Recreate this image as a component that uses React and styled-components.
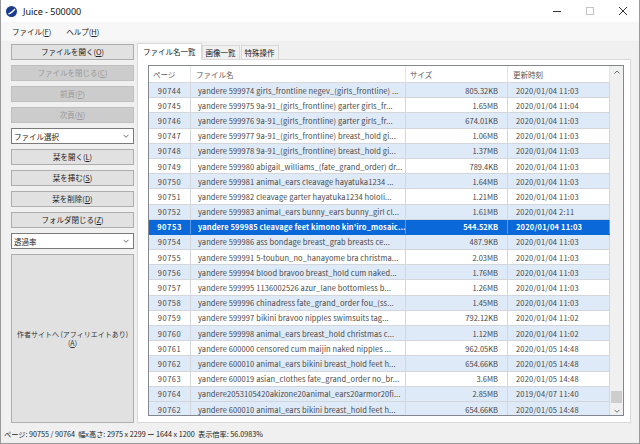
import React from 'react';
import styled, { createGlobalStyle } from 'styled-components';

const Global = createGlobalStyle`
  html, body { margin: 0; padding: 0; background: #f0f0f0; }
  * { box-sizing: border-box; }
`;

const UI = `"Noto Sans CJK JP", "Noto Sans", sans-serif`;

const Window = styled.div`
  width: 640px;
  height: 444px;
  display: flex;
  flex-direction: column;
  background: #f0f0f0;
  border: 1px solid #9a9a9a;
  border-top: none;
  font-family: ${UI};
  font-size: 7.5px;
  color: #000;
  overflow: hidden;
`;

const TitleBar = styled.div`
  height: 22px;
  flex: none;
  background: #fff;
  display: flex;
  align-items: center;
  padding-left: 5px;
`;

const Title = styled.div`
  font-family: "Noto Sans", ${UI};
  font-size: 9px;
  margin-left: 6px;
  flex: 1;
  color: #111;
`;

const WinControls = styled.div`
  display: flex;
  align-items: center;
  height: 100%;
`;

const WinBtn = styled.div`
  width: 33px;
  height: 22px;
  display: flex;
  align-items: center;
  justify-content: center;
`;

const MenuBar = styled.div`
  height: 19px;
  flex: none;
  background: #f7f7f7;
  display: flex;
  align-items: center;
  padding-left: 7px;
`;

const MenuItem = styled.div`
  padding: 0 4px;
  margin-right: 7px;
  font-size: 7.5px;
  color: #222;
`;

const Main = styled.div`
  flex: 1;
  display: flex;
  min-height: 0;
`;

const Sidebar = styled.div`
  width: 133px;
  flex: none;
  display: flex;
  flex-direction: column;
  gap: 5px;
  padding: 3px 0 1px 10px;
`;

const Btn = styled.button`
  height: 16px;
  width: 100%;
  flex: none;
  padding: 0;
  margin: 0;
  border: 1px solid ${p => (p.disabled ? '#bfbfbf' : '#adadad')};
  background: ${p => (p.disabled ? '#cccccc' : '#e1e1e1')};
  color: ${p => (p.disabled ? '#9a9a9a' : '#222')};
  font-family: ${UI};
  font-size: 7.5px;
  line-height: 14px;
  display: flex;
  align-items: center;
  justify-content: center;
  white-space: nowrap;
`;

const BigBtn = styled(Btn)`
  flex: 1;
  height: auto;
  flex-direction: column;
  line-height: 8.5px;
  font-size: 7px;
  color: #333;
`;

const Combo = styled.div`
  height: 16px;
  flex: none;
  border: 1px solid #7a7a7a;
  background: #fff;
  display: flex;
  align-items: center;
  padding: 0 4px 0 2px;
  font-size: 7.5px;
  color: #222;
`;

const ComboText = styled.span`
  flex: 1;
`;

const TabArea = styled.div`
  flex: 1;
  display: flex;
  flex-direction: column;
  padding: 1px 8px 1px 3px;
  min-width: 0;
`;

const TabStrip = styled.div`
  height: 17px;
  flex: none;
  display: flex;
  align-items: flex-end;
  position: relative;
  z-index: 1;
`;

const Tab = styled.div`
  height: ${p => (p.active ? '17px' : '14px')};
  padding: 0 ${p => (p.active ? '5px' : '3px')};
  margin-right: ${p => (p.active ? '0' : '1px')};
  background: ${p => (p.active ? '#fff' : '#f0f0f0')};
  border: 1px solid #d9d9d9;
  border-bottom: ${p => (p.active ? '1px solid #fff' : 'none')};
  display: flex;
  align-items: center;
  font-size: 7.5px;
  color: #222;
  margin-bottom: ${p => (p.active ? '-1px' : '0')};
`;

const TabPanel = styled.div`
  flex: 1;
  background: #fff;
  border: 1px solid #d9d9d9;
  padding: 5px 6px 6px 10px;
  display: flex;
  min-height: 0;
`;

const ListView = styled.div`
  flex: 1;
  border: 1px solid #828790;
  display: flex;
  min-height: 0;
  background: #fff;
`;

const ListBody = styled.div`
  flex: 1;
  display: flex;
  flex-direction: column;
  overflow: hidden;
  min-width: 0;
`;

const COLS = '42px 215px 102px 1fr';

const HeaderRow = styled.div`
  height: 17px;
  flex: none;
  display: grid;
  grid-template-columns: ${COLS};
  border-bottom: 1px solid #d8d8d8;
`;

const HeadCell = styled.div`
  display: flex;
  align-items: center;
  padding-left: ${p => p.pad || 4}px;
  color: #5a5a5a;
  border-right: 1px solid #e5e5e5;
  font-size: 7.5px;
`;

const Row = styled.div`
  height: 15.2px;
  flex: none;
  display: grid;
  grid-template-columns: ${COLS};
  background: ${p => (p.selected ? '#0b68d8' : p.alt ? '#dfeaf8' : '#fff')};
  color: ${p => (p.selected ? '#fff' : '#484848')};
  font-weight: ${p => (p.selected ? 700 : 400)};
  border-bottom: 1px solid ${p => (p.selected ? '#0b68d8' : '#d3d7dc')};
`;

const Cell = styled.div`
  display: flex;
  align-items: center;
  white-space: nowrap;
  overflow: hidden;
  font-size: 7.5px;
  border-right: 1px solid ${p => (p.selected ? '#5c9ae6' : '#d3d7dc')};
  justify-content: ${p => (p.align === 'right' ? 'flex-end' : p.align === 'center' ? 'center' : 'flex-start')};
  padding: 0 ${p => (p.align === 'right' ? '9px' : '0')} 0 ${p => (p.align === 'left' ? (p.pad || 7) + 'px' : '0')};
  letter-spacing: ${p => p.spacing || 0}px;
`;

const ScrollBar = styled.div`
  width: 13px;
  flex: none;
  background: #f0f0f0;
  display: flex;
  flex-direction: column;
  align-items: center;
  justify-content: space-between;
  padding: 4px 0 2px;
  position: relative;
`;

const Thumb = styled.div`
  position: absolute;
  left: 1px;
  right: 1px;
  bottom: 12px;
  height: 12px;
  background: #cdcdcd;
`;

const StatusBar = styled.div`
  height: 19px;
  flex: none;
  display: flex;
  align-items: center;
  padding-left: 3px;
  font-size: 7.2px;
  color: #222;
  white-space: pre;
`;

const Chevron = ({ up }) => (
  <svg width="6" height="4" viewBox="0 0 6 4">
    <path d={up ? 'M0.5 3.5 L3 1 L5.5 3.5' : 'M0.5 0.8 L3 3.3 L5.5 0.8'} fill="none" stroke="#606060" strokeWidth="0.9" />
  </svg>
);

const rows = [
  ['90744', 'yandere 599974 girls_frontline negev_(girls_frontline) ...', '805.32KB', '2020/01/04 11:03'],
  ['90745', 'yandere 599975 9a-91_(girls_frontline) garter girls_fr...', '1.65MB', '2020/01/04 11:04'],
  ['90746', 'yandere 599976 9a-91_(girls_frontline) garter girls_fr...', '674.01KB', '2020/01/04 11:03'],
  ['90747', 'yandere 599977 9a-91_(girls_frontline) breast_hold gi...', '1.06MB', '2020/01/04 11:03'],
  ['90748', 'yandere 599978 9a-91_(girls_frontline) breast_hold gi...', '1.37MB', '2020/01/04 11:03'],
  ['90749', 'yandere 599980 abigail_williams_(fate_grand_order) dr...', '789.4KB', '2020/01/04 11:03'],
  ['90750', 'yandere 599981 animal_ears cleavage hayatuka1234 ...', '1.64MB', '2020/01/04 11:03'],
  ['90751', 'yandere 599982 cleavage garter hayatuka1234 hololi...', '1.21MB', '2020/01/04 11:03'],
  ['90752', 'yandere 599983 animal_ears bunny_ears bunny_girl cl...', '1.61MB', '2020/01/04 2:11'],
  ['90753', "yandere 599985 cleavage feet kimono kin'iro_mosaic...", '544.52KB', '2020/01/04 11:03'],
  ['90754', 'yandere 599986 ass bondage breast_grab breasts ce...', '487.9KB', '2020/01/04 11:03'],
  ['90755', 'yandere 599991 5-toubun_no_hanayome bra christma...', '2.03MB', '2020/01/04 11:03'],
  ['90756', 'yandere 599994 blood bravoo breast_hold cum naked...', '1.76MB', '2020/01/04 11:03'],
  ['90757', 'yandere 599995 1136002526 azur_lane bottomless b...', '1.26MB', '2020/01/04 11:03'],
  ['90758', 'yandere 599996 chinadress fate_grand_order fou_(ss...', '1.45MB', '2020/01/04 11:03'],
  ['90759', 'yandere 599997 bikini bravoo nipples swimsuits tag...', '792.12KB', '2020/01/04 11:02'],
  ['90760', 'yandere 599998 animal_ears breast_hold christmas c...', '1.12MB', '2020/01/04 11:02'],
  ['90761', 'yandere 600000 censored cum maijin naked nipples ...', '962.05KB', '2020/01/05 14:48'],
  ['90762', 'yandere 600010 animal_ears bikini breast_hold feet h...', '654.66KB', '2020/01/05 14:48'],
  ['90763', 'yandere 600019 asian_clothes fate_grand_order no_br...', '3.6MB', '2020/01/05 14:48'],
  ['90764', 'yandere2053105420akizone20animal_ears20armor20fi...', '2.85MB', '2019/04/07 11:40'],
  ['90762', 'yandere 600010 animal_ears bikini breast_hold feet h...', '654.66KB', '2020/01/05 14:48'],
];

const Mn = ({ k }) => (
  <>
    (<u>{k}</u>)
  </>
);

export default function App() {
  return (
    <>
      <Global />
      <Window>
        <TitleBar>
          <svg width="11" height="11" viewBox="0 0 11 11">
            <circle cx="5.5" cy="5.5" r="5.5" fill="#1d3c8f" />
            <path d="M2.2 7.2 C4 6.8 6.8 4.6 8.6 2.4 L9.4 3.4 C7.6 5.8 4.8 8.2 2.8 8.6 Z" fill="#fff" />
          </svg>
          <Title>Juice - 500000</Title>
          <WinControls>
            <WinBtn>
              <svg width="10" height="10" viewBox="0 0 10 10">
                <path d="M1 5.5 H9" stroke="#333" strokeWidth="1" />
              </svg>
            </WinBtn>
            <WinBtn>
              <svg width="10" height="10" viewBox="0 0 10 10">
                <rect x="1.5" y="1.5" width="7" height="7" fill="none" stroke="#c4c4c4" strokeWidth="1" />
              </svg>
            </WinBtn>
            <WinBtn>
              <svg width="10" height="10" viewBox="0 0 10 10">
                <path d="M1 1 L9 9 M9 1 L1 9" stroke="#333" strokeWidth="1" />
              </svg>
            </WinBtn>
          </WinControls>
        </TitleBar>
        <MenuBar>
          <MenuItem>ファイル<Mn k="F" /></MenuItem>
          <MenuItem>ヘルプ<Mn k="H" /></MenuItem>
        </MenuBar>
        <Main>
          <Sidebar>
            <Btn>ファイルを開く<Mn k="O" /></Btn>
            <Btn disabled>ファイルを閉じる<Mn k="C" /></Btn>
            <Btn disabled>前頁<Mn k="P" /></Btn>
            <Btn disabled>次頁<Mn k="N" /></Btn>
            <Combo><ComboText>ファイル選択</ComboText><Chevron /></Combo>
            <Btn>栞を開く<Mn k="L" /></Btn>
            <Btn>栞を挿む<Mn k="S" /></Btn>
            <Btn>栞を削除<Mn k="D" /></Btn>
            <Btn>フォルダ閉じる<Mn k="Z" /></Btn>
            <Combo><ComboText>透過率</ComboText><Chevron /></Combo>
            <BigBtn>
              <span>作者サイトへ (アフィリエイトあり)</span>
              <span><Mn k="A" /></span>
            </BigBtn>
          </Sidebar>
          <TabArea>
            <TabStrip>
              <Tab active>ファイル名一覧</Tab>
              <Tab>画像一覧</Tab>
              <Tab>特殊操作</Tab>
            </TabStrip>
            <TabPanel>
              <ListView>
                <ListBody>
                  <HeaderRow>
                    <HeadCell pad={4}>ページ</HeadCell>
                    <HeadCell pad={5}>ファイル名</HeadCell>
                    <HeadCell pad={4}>サイズ</HeadCell>
                    <HeadCell pad={5}>更新時刻</HeadCell>
                  </HeaderRow>
                  {rows.map((r, i) => {
                    const selected = i === 9;
                    const alt = i % 2 === 0 || i === rows.length - 1;
                    return (
                      <Row key={i} selected={selected} alt={alt}>
                        <Cell align="center" spacing={0.5} selected={selected}>{r[0]}</Cell>
                        <Cell align="left" pad={7} spacing={0.1} selected={selected}>{r[1]}</Cell>
                        <Cell align="right" selected={selected}>{r[2]}</Cell>
                        <Cell align="left" pad={8} spacing={0.2} selected={selected}>{r[3]}</Cell>
                      </Row>
                    );
                  })}
                </ListBody>
                <ScrollBar>
                  <Chevron up />
                  <Thumb />
                  <Chevron />
                </ScrollBar>
              </ListView>
            </TabPanel>
          </TabArea>
        </Main>
        <StatusBar>{'ページ: 90755 / 90764  幅x高さ: 2975 x 2299 ー 1644 x 1200  表示倍率: 56.0983%'}</StatusBar>
      </Window>
    </>
  );
}
